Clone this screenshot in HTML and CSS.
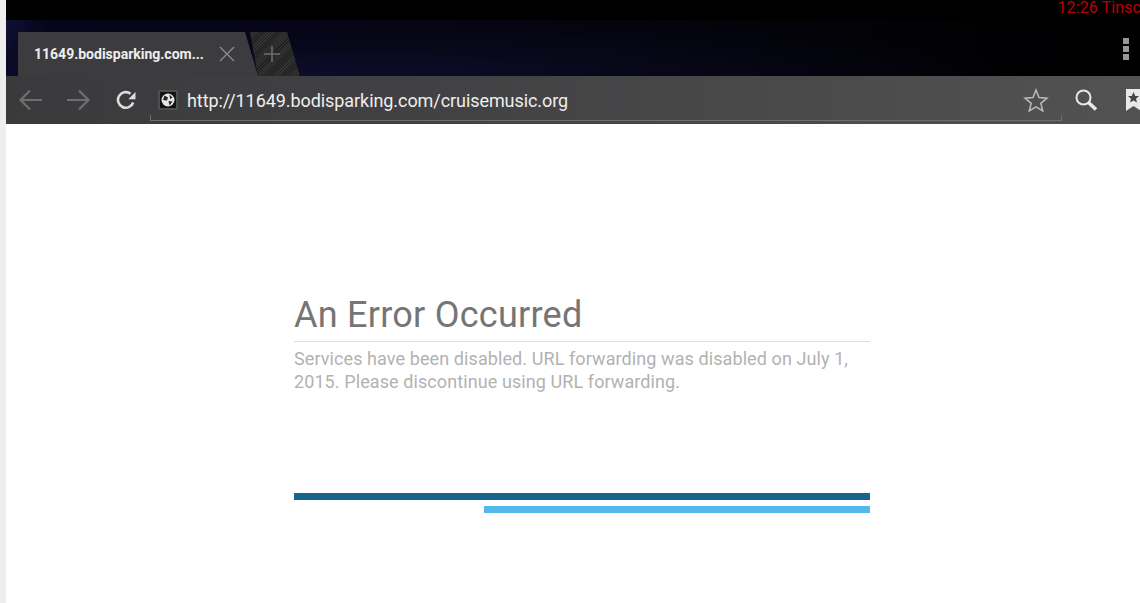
FILE: index.html
```html
<!DOCTYPE html>
<html lang="en">
<head>
<meta charset="utf-8">
<title>An Error Occurred</title>
<link rel="stylesheet" href="styles.css">
</head>
<body>
<div class="gutter"></div>
<div class="screen">
  <div class="status"><span class="clock">12:26 Tinsc</span></div>
  <div class="tabstrip">
    <div class="tab">
      <span class="tab-title">11649.bodisparking.com...</span>
      <svg class="tab-close" width="16" height="16" viewBox="0 0 16 16"><path d="M1 1L15 15M15 1L1 15" stroke="#8c8c8e" stroke-width="1.3" fill="none"/></svg>
    </div>
    <div class="newtab">
      <svg class="newtab-plus" width="18" height="18" viewBox="0 0 18 18"><path d="M9 1V17M1 9H17" stroke="#6e6e6e" stroke-width="1.6" fill="none"/></svg>
    </div>
    <div class="menu"><i></i><i></i><i></i></div>
  </div>
  <div class="toolbar">
    <svg class="nav back" width="24" height="22" viewBox="0 0 24 22"><path d="M23 11H2M11 1.500L1.500 11L11 20.500" stroke="#6f6f70" stroke-width="2.200" fill="none"/></svg>
    <svg class="nav forward" width="24" height="22" viewBox="0 0 24 22"><path d="M1 11H22M13 1.500L22.500 11L13 20.500" stroke="#6f6f70" stroke-width="2.200" fill="none"/></svg>
    <svg class="reload" width="20" height="20" viewBox="0 0 20 20"><path d="M17.200 12.500A7.800 7.800 0 1 1 14.500 3.700" stroke="#dcdcdc" stroke-width="2.600" fill="none"/><path d="M19.500 2V9.200H12.300Z" fill="#dcdcdc"/></svg>
    <div class="urlbar">
      <span class="favicon"><svg width="14" height="14" viewBox="0 0 14 14"><circle cx="7" cy="7" r="6.500" fill="#e6e6e6"/><path d="M3.500 2.500L7 4.500L6 7.500L2 7ZM8.500 1.500L11.500 4.500L9 6ZM7.500 8L11.500 8.500L8.500 12.500Z" fill="#222"/></svg></span>
      <span class="url">http://11649.bodisparking.com/cruisemusic.org</span>
    </div>
    <svg class="star" width="26" height="25" viewBox="0 0 26 25"><path d="M13 2L16 9.600L24 10.200L17.800 15.300L19.800 23L13 18.800L6.200 23L8.200 15.300L2 10.200L10 9.600Z" stroke="#b9b9b9" stroke-width="1.500" fill="none"/></svg>
    <svg class="search" width="24" height="24" viewBox="0 0 24 24"><circle cx="9.500" cy="9.500" r="7" stroke="#e8e8e8" stroke-width="2" fill="none"/><path d="M14.500 14.500L22 21.500" stroke="#e8e8e8" stroke-width="3.600" fill="none"/></svg>
    <svg class="bookmark" width="15" height="22" viewBox="0 0 15 22"><path d="M0 0H15V22L7.500 17L0 22Z" fill="#e8e8e8"/><path d="M7.500 3L9.200 7H13L10 9.700L11 13.500L7.500 11.400L4 13.500L5 9.700L2 7H5.800Z" fill="#444"/></svg>
  </div>
  <main class="page">
    <div class="message">
      <h1 class="title">An Error Occurred</h1>
      <p class="text">Services have been disabled. URL forwarding was disabled on July 1, 2015. Please discontinue using URL forwarding.</p>
      <div class="bar-dark"></div>
      <div class="bar-light"></div>
    </div>
  </main>
</div>
</body>
</html>
```
FILE: styles.css
```css
* { box-sizing: border-box; }
html, body { margin: 0; height: 100%; overflow: hidden; }
body { display: flex; background: #fff; font-family: Roboto, sans-serif; }
.gutter { width: 6px; flex: none; background: #eeeeee; }
.screen { flex: 1; min-width: 0; display: flex; flex-direction: column; }

.status { height: 20px; flex: none; background: #000; display: flex; justify-content: flex-end; overflow: hidden; }
.clock { color: #bb0000; font-size: 16px; line-height: 16px; white-space: nowrap; letter-spacing: 0.1px; margin-right: -1px; }

.tabstrip { height: 56px; flex: none; display: flex; align-items: flex-end; padding-left: 12px; position: relative;
  background: radial-gradient(ellipse 700px 60px at 300px 100%, #0d0d2c 0%, rgba(9,9,30,0.6) 55%, rgba(0,0,0,0) 100%), linear-gradient(90deg, #10103a 0%, #05051a 40px, #04040e 50%, #000 100%); }
.tab { width: 240px; height: 44px; flex: none; display: flex; align-items: center; padding: 0 0 0 16px; background: #3c3c3e;
  clip-path: polygon(0 0, 227px 0, 240px 100%, 0 100%); }
.tab-title { color: #eeeeee; font-size: 14px; font-weight: 700; white-space: nowrap; width: 177px; }
.tab-close { margin-left: 8px; }
.newtab { width: 50px; height: 44px; flex: none; margin-left: -8px; display: flex; align-items: center; justify-content: center; padding-right: 6px;
  background: repeating-linear-gradient(135deg, #343434 0 1px, #202020 1px 2px);
  clip-path: polygon(0 0, 37px 0, 50px 100%, 8px 100%); }
.menu { margin-left: auto; margin-right: 11px; margin-bottom: 16px; display: flex; flex-direction: column; gap: 2px; }
.menu i { display: block; width: 6px; height: 6px; background: #979797; }

.toolbar { height: 48px; flex: none; display: flex; align-items: center; overflow: hidden;
  background: linear-gradient(90deg, #3a3a3c 0%, #424244 40%, #525252 100%); }
.nav { flex: none; }
.back { margin-left: 13px; }
.forward { margin-left: 23px; }
.reload { margin-left: 26px; flex: none; }
.urlbar { width: 912px; height: 48px; flex: none; margin-left: 14px; display: flex; align-items: center; padding: 0 0 0 8px; position: relative; }
.urlbar::after { content: ""; position: absolute; left: 0; right: 0; bottom: 3px; height: 5px; border: 1px solid #6e6e6e; border-top: 0; }
.favicon { width: 20px; height: 20px; flex: none; display: flex; align-items: center; justify-content: center; background: #111; border: 2px solid #4f4f51; }
.url { color: #eeeeee; font-size: 18px; margin-left: 9px; white-space: nowrap; letter-spacing: -0.07px; }
.star { flex: none; margin-left: -39px; position: relative; }
.search { flex: none; margin-left: 25px; }
.bookmark { flex: none; margin-left: 28px; }

.page { flex: 1; background: #fff; padding: 0 0 0 288px; }
.message { width: 576px; padding-top: 169px; }
.title { margin: 0; height: 49px; font-size: 36px; line-height: 44px; font-weight: 400; letter-spacing: 0.25px; color: #757575; border-bottom: 1px solid #dddddd; }
.text { margin: 5px 0 0; height: 146px; font-size: 18px; line-height: 23px; letter-spacing: 0.09px; color: #b2b2b2; }
.bar-dark { height: 7px; background: #15658f; }
.bar-light { height: 7px; margin: 6px 0 0 190px; background: #55b8ea; }
```
